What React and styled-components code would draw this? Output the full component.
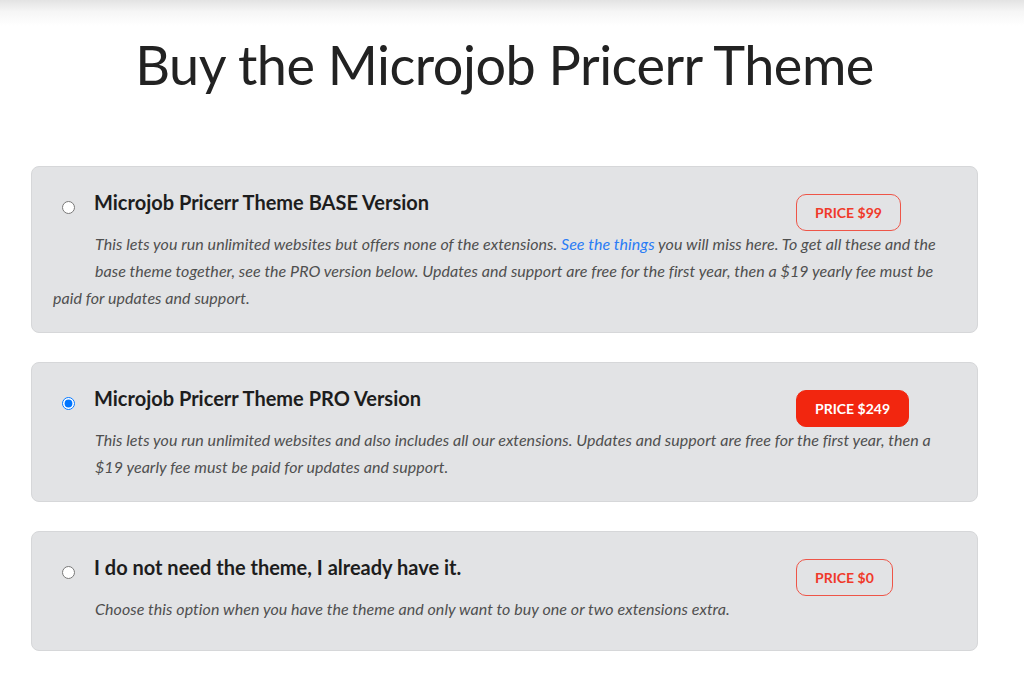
import React, { useState } from "react";
import styled, { createGlobalStyle } from "styled-components";

const GlobalStyle = createGlobalStyle`
  html, body {
    margin: 0;
    padding: 0;
    background: #ffffff;
    font-family: Lato, "Open Sans", "Liberation Sans", sans-serif;
  }
`;

const TopShade = styled.div`
  height: 26px;
  background: linear-gradient(to bottom, #e3e3e3 0%, #f6f6f6 45%, #ffffff 100%);
`;

const Main = styled.main`
  width: 947px;
  margin-left: 31px;
`;

const Heading = styled.h1`
  margin: 4px 0 66px;
  font-size: 54px;
  line-height: 70px;
  font-weight: 400;
  color: #222222;
  text-align: center;
  letter-spacing: -0.5px;
`;

const List = styled.div`
  display: flex;
  flex-direction: column;
  gap: 29px;
`;

const Card = styled.section`
  box-sizing: border-box;
  background: #e2e3e5;
  border: 1px solid #d6d7d9;
  border-radius: 8px;
  padding: 23px 0 21px 21px;
`;

const Header = styled.div`
  display: flex;
  align-items: flex-start;
`;

const Radio = styled.input`
  width: 13px;
  height: 13px;
  margin: 11px 19px 0 9px;
  flex: none;
`;

const Title = styled.h2`
  flex: 1;
  margin: 0;
  font-size: 20px;
  line-height: 24px;
  font-weight: 700;
  color: #1d1d1d;
`;

const PriceCol = styled.div`
  width: 181px;
  flex: none;
  padding-top: 4px;
  margin-bottom: -18px;
`;

const PriceButton = styled.button`
  box-sizing: border-box;
  height: 37px;
  padding: 0 18px;
  border-radius: 10px;
  border: 1px solid ${(p) => (p.$active ? "#f2260f" : "#ee5548")};
  background: ${(p) => (p.$active ? "#f2260f" : "transparent")};
  color: ${(p) => (p.$active ? "#ffffff" : "#f03a2a")};
  font-family: inherit;
  font-size: 14px;
  font-weight: 700;
  cursor: pointer;
`;

/* text wraps round an indent that covers the first two lines */
const Desc = styled.p`
  margin: 16px 31px 0 0;
  font-size: 16px;
  line-height: 27px;
  font-style: italic;
  letter-spacing: 0.05px;
  color: #4f4f4f;

  &::before {
    content: "";
    float: left;
    width: 42px;
    height: 34px;
  }
`;

const Link = styled.a`
  color: #2a7cf5;
  text-decoration: none;
`;

const OPTIONS = [
  {
    id: "base",
    title: "Microjob Pricerr Theme BASE Version",
    price: "PRICE $99",
    body: (
      <>
        This lets you run unlimited websites but offers none of the extensions.{" "}
        <Link href="#">See the things</Link> you will miss here. To get all these and the
        base theme together, see the PRO version below. Updates and support are free for the
        first year, then a $19 yearly fee must be paid for updates and support.
      </>
    ),
  },
  {
    id: "pro",
    title: "Microjob Pricerr Theme PRO Version",
    price: "PRICE $249",
    body: (
      <>
        This lets you run unlimited websites and also includes all our extensions. Updates and
        support are free for the first year, then a $19 yearly fee must be paid for updates and
        support.
      </>
    ),
  },
  {
    id: "none",
    title: "I do not need the theme, I already have it.",
    price: "PRICE $0",
    body: (
      <>Choose this option when you have the theme and only want to buy one or two extensions extra.</>
    ),
  },
];

const App = () => {
  const [selected, setSelected] = useState("pro");

  return (
    <>
      <GlobalStyle />
      <TopShade />
      <Main>
        <Heading>Buy the Microjob Pricerr Theme</Heading>
        <List>
          {OPTIONS.map((opt) => (
            <Card key={opt.id}>
              <Header>
                <Radio
                  type="radio"
                  name="theme"
                  checked={selected === opt.id}
                  onChange={() => setSelected(opt.id)}
                />
                <Title>{opt.title}</Title>
                <PriceCol>
                  <PriceButton $active={selected === opt.id}>{opt.price}</PriceButton>
                </PriceCol>
              </Header>
              <Desc>{opt.body}</Desc>
            </Card>
          ))}
        </List>
      </Main>
    </>
  );
};

export default App;
